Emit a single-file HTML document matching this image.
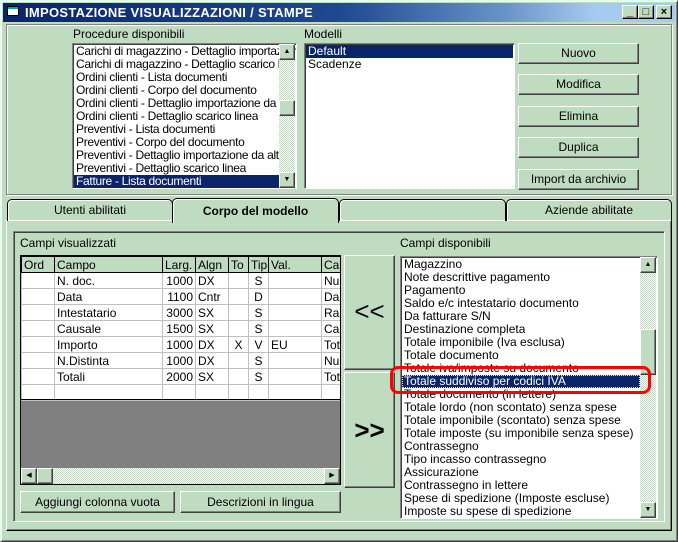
<!DOCTYPE html>
<html><head><meta charset="utf-8"><style>
*{box-sizing:border-box;margin:0;padding:0}
body{width:678px;height:542px;overflow:hidden;background:#c0dcc0;font-family:"Liberation Sans",sans-serif;font-size:11px;color:#000;position:relative}
.a{position:absolute}
.win{left:0;top:0;width:678px;height:542px;border:1px solid;border-color:#dfe 
#404040 #404040 #dfe;box-shadow:inset 1px 1px 0 #fff,inset -1px -1px 0 #808080}
.title{left:3px;top:3px;width:672px;height:19px;background:linear-gradient(90deg,#0a246a 0%,#1e4890 50%,#6a94c8 75%,#a6caf0 88%,#a6caf0 100%);color:#fff;font-weight:bold;font-size:13px;line-height:19px;padding-left:22px;letter-spacing:.3px}
.tb{top:5px;width:16px;height:14px;background:#c0dcc0;border:1px solid;border-color:#fff #000 #000 #fff;box-shadow:inset -1px -1px 0 #808080;font-size:11px;font-weight:bold;text-align:center;line-height:12px}
.grp{border:1px solid #808080;box-shadow:1px 1px 0 #fff,inset 1px 1px 0 #fff}
.sunk{background:#fff;border:1px solid;border-color:#808080 #fff #fff #808080;box-shadow:inset 1px 1px 0 #404040}
.btn{background:#c0dcc0;border:1px solid;border-color:#fff #404040 #404040 #fff;box-shadow:inset -1px -1px 0 #808080;text-align:center;font-size:12px}
.li{position:absolute;left:3px;white-space:nowrap;font-size:12px;line-height:13px;height:13px;overflow:hidden}
.nl .li{letter-spacing:-0.3px}
.sel{background:#0a246a;color:#fff}
.sb{background:repeating-conic-gradient(#c0dcc0 0 25%,#fff 0 50%) 0 0/2px 2px}
.sbb{position:absolute;width:16px;height:16px;background:#c0dcc0;border:1px solid;border-color:#fff #404040 #404040 #fff;box-shadow:inset -1px -1px 0 #808080;font-size:7px;text-align:center;line-height:14px}
.tab{top:199px;height:22px;border:1px solid #000;border-bottom:none;border-radius:5px 5px 0 0;box-shadow:inset 1px 1px 0 #fff;text-align:center;font-size:12px;line-height:20px}
table{border-collapse:collapse;font-size:12px}
td{border:1px solid #c0c0c0;height:16px;padding:0 2px;white-space:nowrap;overflow:hidden}
th{border:1px solid #000;font-weight:normal;text-align:left;padding:0 2px;height:16px;background:#c0dcc0;white-space:nowrap;overflow:hidden}
</style></head><body>
<div class="a win"></div>
<div class="a title">IMPOSTAZIONE VISUALIZZAZIONI / STAMPE</div>
<div class="a" style="left:7px;top:6px;width:12px;height:10px;background:#fff;border:1px solid #000;box-shadow:inset 0 2px 0 #0aa"></div>
<div class="a tb" style="left:622px">_</div>
<div class="a tb" style="left:638px">□</div>
<div class="a tb" style="left:656px">×</div>

<div class="a grp" style="left:6px;top:24px;width:666px;height:171px"></div>
<div class="a" style="left:73px;top:27px;font-size:12px">Procedure disponibili</div>
<div class="a sunk nl" style="left:72px;top:43px;width:225px;height:146px;overflow:hidden">
<div class="li" style="top:1px">Carichi di magazzino - Dettaglio importazion</div>
<div class="li" style="top:14px">Carichi di magazzino - Dettaglio scarico line</div>
<div class="li" style="top:27px">Ordini clienti - Lista documenti</div>
<div class="li" style="top:40px">Ordini clienti - Corpo del documento</div>
<div class="li" style="top:53px">Ordini clienti - Dettaglio importazione da altr</div>
<div class="li" style="top:66px">Ordini clienti - Dettaglio scarico linea</div>
<div class="li" style="top:79px">Preventivi - Lista documenti</div>
<div class="li" style="top:92px">Preventivi - Corpo del documento</div>
<div class="li" style="top:105px">Preventivi - Dettaglio importazione da altri d</div>
<div class="li" style="top:118px">Preventivi - Dettaglio scarico linea</div>
<div class="li sel" style="top:131px;left:1px;width:205px;padding-left:2px">Fatture - Lista documenti</div>
<div class="a sb" style="left:206px;top:0;width:16px;height:144px"></div>
<div class="sbb" style="left:206px;top:0">▲</div>
<div class="sbb" style="left:206px;top:56px"></div>
<div class="sbb" style="left:206px;top:128px">▼</div>
</div>
<div class="a" style="left:304px;top:27px;font-size:12px">Modelli</div>
<div class="a sunk" style="left:304px;top:43px;width:211px;height:146px">
<div class="li sel" style="top:1px;left:1px;width:207px;padding-left:2px">Default</div>
<div class="li" style="top:14px">Scadenze</div>
</div>
<div class="a btn" style="left:518px;top:43px;width:121px;height:21px;line-height:19px">Nuovo</div>
<div class="a btn" style="left:518px;top:74px;width:121px;height:21px;line-height:19px">Modifica</div>
<div class="a btn" style="left:518px;top:106px;width:121px;height:21px;line-height:19px">Elimina</div>
<div class="a btn" style="left:518px;top:137px;width:121px;height:21px;line-height:19px">Duplica</div>
<div class="a btn" style="left:518px;top:169px;width:121px;height:21px;line-height:19px">Import da archivio</div>

<div class="a" style="left:6px;top:220px;width:666px;height:311px;border:1px solid;border-color:#fff #000 #000 #fff;box-shadow:inset -1px -1px 0 #808080"></div>
<div class="a tab" style="left:7px;width:166px">Utenti abilitati</div>
<div class="a tab" style="left:339px;width:167px"></div>
<div class="a tab" style="left:506px;width:166px">Aziende abilitate</div>
<div class="a tab" style="left:172px;top:198px;height:25px;width:167px;background:#c0dcc0;font-weight:bold;line-height:25px;z-index:2">Corpo del modello</div>

<div class="a" style="left:13px;top:231px;width:652px;height:291px;border:1px solid;border-color:#808080 #fff #fff #808080;box-shadow:inset 1px 1px 0 #404040"></div>
<div class="a" style="left:20px;top:236px;font-size:12px">Campi visualizzati</div>
<div class="a" style="left:20px;top:255px;width:321px;height:230px;border:1px solid #000;background:#808080;overflow:hidden">
<table style="width:340px;table-layout:fixed;background:#fff">
<colgroup><col style="width:33px"><col style="width:108px"><col style="width:33px"><col style="width:33px"><col style="width:20px"><col style="width:20px"><col style="width:53px"><col style="width:40px"></colgroup>
<tr><th>Ord</th><th>Campo</th><th>Larg.</th><th>Algn</th><th>To</th><th>Tip</th><th>Val.</th><th>Car</th></tr>
<tr><td></td><td>N. doc.</td><td style="text-align:right">1000</td><td>DX</td><td></td><td style="text-align:center">S</td><td></td><td>Nu</td></tr>
<tr><td></td><td>Data</td><td style="text-align:right">1100</td><td>Cntr</td><td></td><td style="text-align:center">D</td><td></td><td>Da</td></tr>
<tr><td></td><td>Intestatario</td><td style="text-align:right">3000</td><td>SX</td><td></td><td style="text-align:center">S</td><td></td><td>Ra</td></tr>
<tr><td></td><td>Causale</td><td style="text-align:right">1500</td><td>SX</td><td></td><td style="text-align:center">S</td><td></td><td>Ca</td></tr>
<tr><td></td><td>Importo</td><td style="text-align:right">1000</td><td>DX</td><td style="text-align:center">X</td><td style="text-align:center">V</td><td>EU</td><td>Tot</td></tr>
<tr><td></td><td>N.Distinta</td><td style="text-align:right">1000</td><td>DX</td><td></td><td style="text-align:center">S</td><td></td><td>Nu</td></tr>
<tr><td></td><td>Totali</td><td style="text-align:right">2000</td><td>SX</td><td></td><td style="text-align:center">S</td><td></td><td>Tot</td></tr>
<tr><td></td><td></td><td></td><td></td><td></td><td></td><td></td><td></td></tr>
</table>
<div class="a" style="left:0;top:143px;width:320px;height:1px;background:#000"></div>
<div class="a sb" style="left:0;top:212px;width:319px;height:16px"></div>
<div class="sbb" style="left:0;top:212px">◀</div>
<div class="sbb" style="left:16px;top:212px"></div>
<div class="sbb" style="left:303px;top:212px">▶</div>
</div>
<div class="a btn" style="left:20px;top:491px;width:155px;height:22px;line-height:20px">Aggiungi colonna vuota</div>
<div class="a btn" style="left:180px;top:491px;width:161px;height:22px;line-height:20px">Descrizioni in lingua</div>
<div class="a btn" style="left:344px;top:255px;width:51px;height:115px;line-height:110px;font-size:26px">&lt;&lt;</div>
<div class="a btn" style="left:344px;top:372px;width:51px;height:116px;line-height:114px;font-size:26px;font-weight:bold">&gt;&gt;</div>

<div class="a" style="left:400px;top:236px;font-size:12px">Campi disponibili</div>
<div class="a sunk" style="left:400px;top:256px;width:258px;height:263px;overflow:hidden">
<div class="li" style="top:1px">Magazzino</div>
<div class="li" style="top:14px">Note descrittive pagamento</div>
<div class="li" style="top:27px">Pagamento</div>
<div class="li" style="top:40px">Saldo e/c intestatario documento</div>
<div class="li" style="top:53px">Da fatturare S/N</div>
<div class="li" style="top:66px">Destinazione completa</div>
<div class="li" style="top:79px">Totale imponibile (Iva esclusa)</div>
<div class="li" style="top:92px">Totale documento</div>
<div class="li" style="top:105px">Totale iva/imposte su documento</div>
<div class="li sel" style="top:118px;left:1px;width:238px;padding-left:2px;outline:1px dotted #ff0;outline-offset:-1px">Totale suddiviso per codici IVA</div>
<div class="li" style="top:131px">Totale documento (in lettere)</div>
<div class="li" style="top:144px">Totale lordo (non scontato) senza spese</div>
<div class="li" style="top:157px">Totale imponibile (scontato) senza spese</div>
<div class="li" style="top:170px">Totale imposte (su imponibile senza spese)</div>
<div class="li" style="top:183px">Contrassegno</div>
<div class="li" style="top:196px">Tipo incasso contrassegno</div>
<div class="li" style="top:209px">Assicurazione</div>
<div class="li" style="top:222px">Contrassegno in lettere</div>
<div class="li" style="top:235px">Spese di spedizione (Imposte escluse)</div>
<div class="li" style="top:248px">Imposte su spese di spedizione</div>
<div class="a sb" style="left:239px;top:0;width:16px;height:261px"></div>
<div class="sbb" style="left:239px;top:0">▲</div>
<div class="sbb" style="left:239px;top:72px;height:46px"></div>
<div class="sbb" style="left:239px;top:245px">▼</div>
</div>
<div class="a" style="left:390px;top:366px;width:261px;height:28px;border:3px solid #f00;border-radius:8px"></div>
</body></html>
